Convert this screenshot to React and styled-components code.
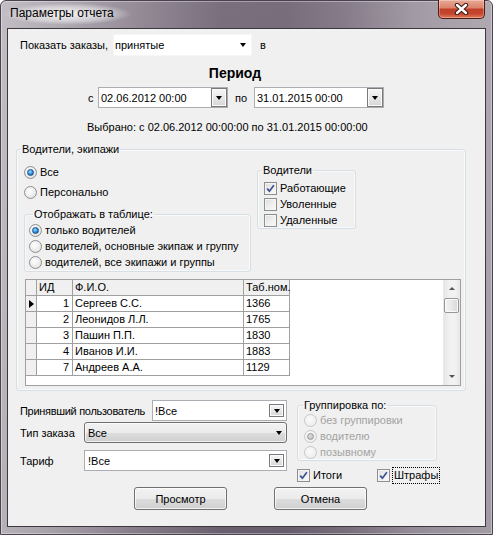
import React from 'react';
import styled, { createGlobalStyle } from 'styled-components';

const GlobalStyle = createGlobalStyle`
  html, body { margin: 0; padding: 0; }
  body {
    font-family: "Liberation Sans", Arial, sans-serif;
    font-size: 11px;
    color: #000;
    background: #fff;
  }
`;

const Window = styled.div`
  width: 493px;
  height: 535px;
  box-sizing: border-box;
  display: flex;
  flex-direction: column;
  padding: 0 6px 7px;
  border: 1px solid #4a4250;
  border-radius: 6px 6px 0 0;
  box-shadow: inset 0 0 0 1px rgba(255, 255, 255, 0.35);
  background:
    linear-gradient(180deg, rgba(255, 255, 255, 0.08), rgba(0, 0, 0, 0.04)),
    linear-gradient(90deg, #bdb8bf 0%, #a69fa9 14%, #8b818e 28%, #6e6372 45%, #6c6170 58%, #7c7180 70%, #9a929d 84%, #a9a2ab 100%);
`;

const TitleBar = styled.div`
  height: 27px;
  display: flex;
  align-items: flex-start;
`;

const Title = styled.div`
  margin: 2px 0 0 -4px;
  padding: 3px 18px 4px 7px;
  font-size: 12px;
  line-height: 15px;
  background: radial-gradient(closest-side, rgba(255, 255, 255, 0.85), rgba(255, 255, 255, 0.45) 65%, rgba(255, 255, 255, 0));
`;

const CloseButton = styled.div`
  margin: -1px 1px 0 auto;
  width: 47px;
  height: 19px;
  box-sizing: border-box;
  border: 1px solid #4e1a14;
  border-top: none;
  border-radius: 0 0 5px 5px;
  background: linear-gradient(180deg, #e9a896 0%, #da856d 42%, #c0402a 52%, #c4452c 75%, #e07a58 100%);
  box-shadow: inset 0 0 0 1px rgba(255, 255, 255, 0.3);
  display: flex;
  align-items: center;
  justify-content: center;
`;

const Content = styled.div`
  flex: 1;
  display: flex;
  flex-direction: column;
  background: #f0f0f0;
  border: 1px solid #3d383f;
`;

const Row = styled.div`
  display: flex;
  align-items: center;
`;

const TopRow = styled(Row)`
  margin: 5px 0 0 12px;
  height: 22px;
`;

const Label = styled.span`
  line-height: 14px;
  white-space: nowrap;
  width: ${p => (p.$w ? `${p.$w}px` : 'auto')};
  flex: ${p => (p.$grow ? 1 : 'none')};
  letter-spacing: ${p => p.$tight || 0}px;
`;

const PeriodTitle = styled.div`
  width: 454px;
  margin-top: 9px;
  text-align: center;
  font-size: 14px;
  font-weight: bold;
  line-height: 17px;
`;

const DateRow = styled(Row)`
  margin: 5px 0 0 80px;
  height: 21px;
`;

const Selected = styled.div`
  margin: 12px 0 0 79px;
  line-height: 14px;
`;

const Field = styled.div`
  display: flex;
  align-items: center;
  flex: none;
  box-sizing: border-box;
  width: ${p => p.$w}px;
  height: ${p => p.$h || 21}px;
  padding-left: ${p => p.$pad || 2}px;
  background: #fff;
  border: 1px solid ${p => (p.$flat ? '#f6f6f6' : '#abadb3')};
`;

const FieldText = styled.span`
  flex: 1;
  line-height: 14px;
  white-space: nowrap;
`;

const Arrow = styled.span`
  width: 0;
  height: 0;
  border-left: 3.5px solid transparent;
  border-right: 3.5px solid transparent;
  border-top: 4px solid #000;
`;

const PlainArrow = styled(Arrow)`
  margin-right: ${p => p.$right}px;
`;

const DropButton = styled.span`
  box-sizing: border-box;
  width: ${p => p.$w || 15}px;
  height: ${p => p.$h || 13}px;
  margin-right: ${p => p.$right ?? 2}px;
  display: flex;
  align-items: center;
  justify-content: center;
  border: 1px solid #7a7a7a;
  background: linear-gradient(180deg, #f6f6f6 0%, #e8e8e8 50%, #d6d6d6 100%);
  box-shadow: inset 0 0 0 1px #fbfbfb;
`;

const ButtonCombo = styled.div`
  display: flex;
  align-items: center;
  flex: none;
  box-sizing: border-box;
  width: ${p => p.$w}px;
  height: 21px;
  padding: 0 4px 0 3px;
  border: 1px solid #707070;
  border-radius: 3px;
  background: linear-gradient(180deg, #f2f2f2 0%, #ebebeb 50%, #dddddd 51%, #cfcfcf 100%);
  box-shadow: inset 0 0 0 1px rgba(255, 255, 255, 0.7);
`;

const Group = styled.fieldset`
  box-sizing: border-box;
  width: ${p => p.$w}px;
  margin: ${p => p.$m || 0};
  padding: ${p => p.$pad || 0};
  min-width: 0;
  border: 1px solid #d5dfe5;
  border-radius: 3px;
  box-shadow: inset 0 0 0 1px rgba(255, 255, 255, 0.6);
`;

const Legend = styled.legend`
  padding: 0 1px;
  margin-left: ${p => p.$m || 0}px;
  line-height: 14px;
  color: #000;
`;

const Option = styled.label`
  display: flex;
  align-items: center;
  height: ${p => p.$h || 16}px;
  width: ${p => (p.$w ? `${p.$w}px` : 'auto')};
  line-height: 14px;
  white-space: nowrap;
  color: ${p => (p.$disabled ? '#a3a3a3' : '#000')};
`;

const RadioCircle = styled.span`
  box-sizing: border-box;
  width: 13px;
  height: 13px;
  margin-right: 3px;
  border-radius: 50%;
  border: 1px solid ${p => (p.$disabled ? '#c8c8c8' : '#8e8f8f')};
  background: ${p =>
    p.$disabled
      ? 'radial-gradient(circle at 40% 35%, #fafafa 0%, #efefef 70%, #e4e4e4 100%)'
      : 'radial-gradient(circle at 40% 35%, #ffffff 0%, #e8e8e8 65%, #cfcfcf 100%)'};
  display: flex;
  align-items: center;
  justify-content: center;
  &::after {
    content: '';
    display: ${p => (p.$checked ? 'block' : 'none')};
    box-sizing: border-box;
    width: 7px;
    height: 7px;
    border-radius: 50%;
    border: 1px solid ${p => (p.$disabled ? '#9a9a9a' : '#1a4f8c')};
    background: ${p =>
      p.$disabled
        ? 'radial-gradient(circle at 40% 35%, #e0e0e0 0%, #b4b4b4 100%)'
        : 'radial-gradient(circle at 40% 35%, #9fe0ff 0%, #2b8ee0 55%, #0d4c98 100%)'};
  }
`;

const CheckBox = styled.span`
  box-sizing: border-box;
  width: 13px;
  height: 13px;
  margin-right: 3px;
  border: 1px solid #8e8f8f;
  background: linear-gradient(135deg, #dcdcdc 0%, #eeeeee 50%, #fafafa 100%);
  box-shadow: inset 0 0 0 1px #f4f4f4;
  display: flex;
  align-items: center;
  justify-content: center;
`;

const FocusText = styled.span`
  padding: 0 1px;
  outline: 1px dotted #000;
  outline-offset: 0;
  line-height: 15px;
`;

const Radio = ({ children, checked, disabled, h }) => (
  <Option $disabled={disabled} $h={h}>
    <RadioCircle $checked={checked} $disabled={disabled} />
    {children}
  </Option>
);

const Check = ({ children, checked, focus, h, w }) => (
  <Option $h={h} $w={w}>
    <CheckBox>
      {checked && (
        <svg width="9" height="9" viewBox="0 0 9 9">
          <path d="M1.2 4.6 L3.4 7.2 L7.9 1.2" fill="none" stroke="#3c4f8e" strokeWidth="1.7" />
        </svg>
      )}
    </CheckBox>
    {focus ? <FocusText>{children}</FocusText> : children}
  </Option>
);

const DriversRow = styled.div`
  display: flex;
  align-items: flex-start;
`;

const LeftCol = styled.div`
  display: flex;
  flex-direction: column;
  width: 227px;
`;

const Table = styled.div`
  display: flex;
  box-sizing: border-box;
  width: 436px;
  height: 107px;
  margin: 7px 0 0 1px;
  background: #fff;
  border: 1px solid #a0a0a0;
`;

const Grid = styled.div`
  flex: 1;
  display: grid;
  grid-template-columns: 11px 36px 171px 46px;
  grid-auto-rows: 16px;
  align-content: start;
`;

const Cell = styled.div`
  box-sizing: border-box;
  border-right: 1px solid #a0a0a0;
  border-bottom: 1px solid #a0a0a0;
  background: ${p => (p.$head ? '#f0f0f0' : '#fff')};
  padding: ${p => (p.$right ? '0 3px 0 0' : '0 0 0 2px')};
  line-height: 15px;
  white-space: nowrap;
  display: flex;
  align-items: center;
  justify-content: ${p => (p.$right ? 'flex-end' : 'flex-start')};
`;

const Indicator = styled.span`
  width: 0;
  height: 0;
  margin-left: 1px;
  border-top: 4px solid transparent;
  border-bottom: 4px solid transparent;
  border-left: 5px solid #000;
`;

const ScrollBar = styled.div`
  width: 17px;
  display: flex;
  flex-direction: column;
  background: linear-gradient(90deg, #e6e6e6, #f2f2f2 40%, #f2f2f2 70%, #e6e6e6);
  border-left: 1px solid #e8e8e8;
  box-sizing: border-box;
`;

const ScrollArrow = styled.div`
  height: 17px;
  display: flex;
  align-items: center;
  justify-content: center;
  &::after {
    content: '';
    width: 0;
    height: 0;
    border-left: 3.5px solid transparent;
    border-right: 3.5px solid transparent;
    ${p => (p.$down ? 'border-top: 3px solid #555;' : 'border-bottom: 3px solid #555;')}
  }
`;

const Thumb = styled.div`
  height: 15px;
  margin: 1px 1px 0 0;
  box-sizing: border-box;
  border: 1px solid #979797;
  border-radius: 2px;
  background: linear-gradient(90deg, #f3f3f3 0%, #e8e8e8 50%, #d8d8d8 100%);
  box-shadow: inset 0 0 0 1px #fafafa;
`;

const Track = styled.div`
  flex: 1;
`;

const BottomArea = styled.div`
  display: flex;
  align-items: flex-start;
  margin-left: 12px;
`;

const FilterCol = styled.div`
  display: flex;
  flex-direction: column;
  width: 267px;
  margin-top: 9px;
`;

const FilterRow = styled(Row)`
  justify-content: space-between;
  margin-top: ${p => p.$m || 0}px;
`;

const GroupCol = styled.div`
  display: flex;
  flex-direction: column;
  margin: 7px 0 0 10px;
`;

const ChecksRow = styled(Row)`
  margin-top: 6px;
`;

const ButtonsRow = styled(Row)`
  margin: 4px 0 0 126px;
  gap: 47px;
`;

const Button = styled.div`
  box-sizing: border-box;
  width: 93px;
  height: 23px;
  display: flex;
  align-items: center;
  justify-content: center;
  border: 1px solid #707070;
  border-radius: 3px;
  background: linear-gradient(180deg, #f2f2f2 0%, #ebebeb 50%, #dddddd 51%, #cfcfcf 100%);
  box-shadow: inset 0 0 0 1px rgba(255, 255, 255, 0.75);
`;

const rows = [
  { id: 1, name: 'Сергеев С.С.', tab: '1366' },
  { id: 2, name: 'Леонидов Л.Л.', tab: '1765' },
  { id: 3, name: 'Пашин П.П.', tab: '1830' },
  { id: 4, name: 'Иванов И.И.', tab: '1883' },
  { id: 7, name: 'Андреев А.А.', tab: '1129' },
];

const App = () => (
  <>
    <GlobalStyle />
    <Window>
      <TitleBar>
        <Title>Параметры отчета</Title>
        <CloseButton>
          <svg width="15" height="12" viewBox="0 0 15 12">
            <path d="M3 2 L12 10 M12 2 L3 10" stroke="#3b1712" strokeWidth="4.4" strokeLinecap="round" />
            <path d="M3 2 L12 10 M12 2 L3 10" stroke="#fff" strokeWidth="2.4" strokeLinecap="round" />
          </svg>
        </CloseButton>
      </TitleBar>
      <Content>
        <TopRow>
          <Label $w={93}>Показать заказы,</Label>
          <Field $w={139} $h={22} $flat $pad={1}>
            <FieldText>принятые</FieldText>
            <PlainArrow $right={5} />
          </Field>
          <Label style={{ marginLeft: 8 }}>в</Label>
        </TopRow>
        <PeriodTitle>Период</PeriodTitle>
        <DateRow>
          <Label $w={10}>с</Label>
          <Field $w={130}>
            <FieldText>02.06.2012 00:00</FieldText>
            <DropButton $w={16} $h={19} $right={0}>
              <Arrow />
            </DropButton>
          </Field>
          <Label $w={26} style={{ textAlign: 'center' }}>по</Label>
          <Field $w={130}>
            <FieldText>31.01.2015 00:00</FieldText>
            <DropButton $w={16} $h={19} $right={0}>
              <Arrow />
            </DropButton>
          </Field>
        </DateRow>
        <Selected>Выбрано: с 02.06.2012 00:00:00 по 31.01.2015 00:00:00</Selected>

        <Group $w={450} $m="8px 0 0 8px" $pad="6px 3px 4px 7px">
          <Legend $m={-3}>Водители, экипажи</Legend>
          <DriversRow>
            <LeftCol>
              <Radio checked h={20}>Все</Radio>
              <Radio h={20}>Персонально</Radio>
              <Group $w={227} $m="5px 0 0 0" $pad="1px 4px 1px 4px">
                <Legend $m={4}>Отображать в таблице:</Legend>
                <Radio checked>только водителей</Radio>
                <Radio>водителей, основные экипаж и группу</Radio>
                <Radio>водителей, все экипажи и группы</Radio>
              </Group>
            </LeftCol>
            <Group $w={99} $m="1px 0 0 6px" $pad="3px 4px 0 6px">
              <Legend $m={-2}>Водители</Legend>
              <Check checked>Работающие</Check>
              <Check>Уволенные</Check>
              <Check>Удаленные</Check>
            </Group>
          </DriversRow>
          <Table>
            <Grid>
              <Cell $head />
              <Cell $head>ИД</Cell>
              <Cell $head>Ф.И.О.</Cell>
              <Cell $head>Таб.ном.</Cell>
              {rows.map((r, i) => (
                <React.Fragment key={r.id}>
                  <Cell $head>{i === 0 && <Indicator />}</Cell>
                  <Cell $right>{r.id}</Cell>
                  <Cell>{r.name}</Cell>
                  <Cell>{r.tab}</Cell>
                </React.Fragment>
              ))}
            </Grid>
            <ScrollBar>
              <ScrollArrow />
              <Thumb />
              <Track />
              <ScrollArrow $down />
            </ScrollBar>
          </Table>
        </Group>

        <BottomArea>
          <FilterCol>
            <FilterRow>
              <Label $grow $tight={-0.3}>Принявший пользователь</Label>
              <Field $w={135}>
                <FieldText>!Все</FieldText>
                <DropButton>
                  <Arrow />
                </DropButton>
              </Field>
            </FilterRow>
            <FilterRow $m={1}>
              <Label $grow>Тип заказа</Label>
              <ButtonCombo $w={203}>
                <FieldText>Все</FieldText>
                <Arrow />
              </ButtonCombo>
            </FilterRow>
            <FilterRow $m={7}>
              <Label $grow>Тариф</Label>
              <Field $w={203} $pad={3}>
                <FieldText>!Все</FieldText>
                <DropButton>
                  <Arrow />
                </DropButton>
              </Field>
            </FilterRow>
          </FilterCol>
          <GroupCol>
            <Group $w={140} $pad="0 4px 0 6px">
              <Legend $m={-1}>Группировка по:</Legend>
              <Radio disabled>без группировки</Radio>
              <Radio disabled checked>водителю</Radio>
              <Radio disabled>позывному</Radio>
            </Group>
            <ChecksRow>
              <Check checked w={80}>Итоги</Check>
              <Check checked focus>Штрафы</Check>
            </ChecksRow>
          </GroupCol>
        </BottomArea>
        <ButtonsRow>
          <Button>Просмотр</Button>
          <Button>Отмена</Button>
        </ButtonsRow>
      </Content>
    </Window>
  </>
);

export default App;
